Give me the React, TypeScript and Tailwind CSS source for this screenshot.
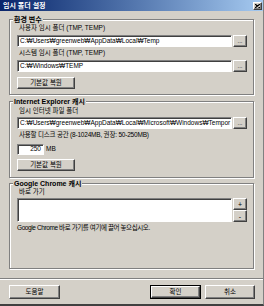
import React from 'react';

const raised =
  'border border-t-white border-l-white border-b-[#404040] border-r-[#404040] shadow-[inset_-1px_-1px_0_#808080] bg-[#d4d0c8]';
const sunken =
  'border border-t-[#808080] border-l-[#808080] border-b-white border-r-white shadow-[inset_1px_1px_0_#404040] bg-white';

export default function App() {
  return (
    <div className="w-[264px] h-[306px] bg-[#d4d0c8] text-black text-[6.5px] leading-none font-['Liberation_Sans','Noto_Sans_CJK_KR',sans-serif] flex flex-col overflow-hidden border-r border-b-2 border-r-[#808080] border-b-[#404040]">
      {/* Title bar */}
      <div className="h-[11px] shrink-0 flex items-center justify-between pl-[3px] pr-[1px] bg-linear-to-r from-[#0a246a] to-[#a6caf0]">
        <span className="text-white font-bold text-[7px]">임시 폴더 설정</span>
        <button className={`${raised} w-[9px] h-[8px] flex items-center justify-center`}>
          <svg width="5" height="4" viewBox="0 0 5 4">
            <path d="M0 0L5 4M5 0L0 4" stroke="#000" strokeWidth="1.2" />
          </svg>
        </button>
      </div>

      {/* 환경 변수 */}
      <GroupBox title="환경 변수" className="mt-[8px] h-[76px]">
        <Label className="mt-[3px]">사용자 임시 폴더 (TMP, TEMP)</Label>
        <PathRow className="mt-[2px]" value="C:₩Users₩greenweb₩AppData₩Local₩Temp" />
        <Label className="mt-[1px]">시스템 임시 폴더 (TMP, TEMP)</Label>
        <PathRow className="mt-[2px]" value="C:₩Windows₩TEMP" />
        <RestoreButton className="mt-[5px]" />
      </GroupBox>

      {/* Internet Explorer */}
      <GroupBox title="Internet Explorer 캐시" className="mt-[6px] h-[77px]">
        <Label className="mt-[4px]">임시 인터넷 파일 폴더</Label>
        <PathRow className="mt-[1px]" value="C:₩Users₩greenweb₩AppData₩Local₩Microsoft₩Windows₩Tempor" />
        <Label className="mt-[1px] tracking-[-0.2px]">사용할 디스크 공간 (8-1024MB, 권장: 50-250MB)</Label>
        <div className="mt-[4px] flex items-center gap-[2px]">
          <div className={`${sunken} w-[27px] h-[11px] flex items-center justify-end pr-[2px]`}>250</div>
          <span>MB</span>
        </div>
        <RestoreButton className="mt-[4px]" />
      </GroupBox>

      {/* Google Chrome */}
      <GroupBox title="Google Chrome 캐시" className="mt-[5px] h-[86px]">
        <Label className="mt-[3px]">바로 가기</Label>
        <div className="mt-[1px] flex gap-[1px]">
          <div className={`${sunken} w-[215px] h-[24px]`} />
          <div className="flex flex-col">
            <button className={`${raised} w-[14px] h-[12px] flex items-center justify-center text-[7px]`}>+</button>
            <button className={`${raised} w-[14px] h-[12px] flex items-center justify-center text-[7px]`}>-</button>
          </div>
        </div>
        <div className="mt-[1px] h-[10px] flex items-center tracking-[-0.4px]">
          Google Chrome 바로 가기를 여기에 끌어 놓으십시오.
        </div>
      </GroupBox>

      {/* Separator */}
      <div className="mt-[9px] border-t border-t-[#808080] border-b border-b-white" />

      {/* Bottom buttons */}
      <div className="mt-[5px] pl-[9px] pr-[8px] flex items-center">
        <button className={`${raised} w-[51px] h-[14px] flex items-center justify-center`}>도움말</button>
        <div className="ml-auto flex gap-[4px]">
          <div className="border border-black">
            <button className={`${raised} w-[49px] h-[12px] flex items-center justify-center`}>확인</button>
          </div>
          <button className={`${raised} w-[50px] h-[14px] flex items-center justify-center`}>취소</button>
        </div>
      </div>
    </div>
  );
}

function GroupBox({
  title,
  className,
  children,
}: {
  title: string;
  className: string;
  children: React.ReactNode;
}) {
  return (
    <div
      className={`relative shrink-0 ml-[9px] w-[245px] border border-[#808080] shadow-[1px_1px_0_#fff,inset_1px_1px_0_#fff] pl-[7px] flex flex-col ${className}`}
    >
      <span className="absolute -top-[5px] left-[3px] px-[1px] bg-[#d4d0c8] font-bold text-[7px] leading-[9px]">
        {title}
      </span>
      {children}
    </div>
  );
}

function Label({ className, children }: { className: string; children: React.ReactNode }) {
  return <div className={`h-[10px] pl-[2px] flex items-center ${className}`}>{children}</div>;
}

function PathRow({ value, className }: { value: string; className: string }) {
  return (
    <div className={`flex gap-[1px] ${className}`}>
      <div className={`${sunken} w-[215px] h-[12px] flex items-center px-[2px] overflow-hidden whitespace-nowrap`}>
        {value}
      </div>
      <button className={`${raised} w-[14px] h-[12px] flex items-end justify-center pb-[2px] text-[6px]`}>...</button>
    </div>
  );
}

function RestoreButton({ className }: { className: string }) {
  return (
    <button className={`${raised} w-[58px] h-[12px] flex items-center justify-center ${className}`}>
      기본값 복원
    </button>
  );
}
